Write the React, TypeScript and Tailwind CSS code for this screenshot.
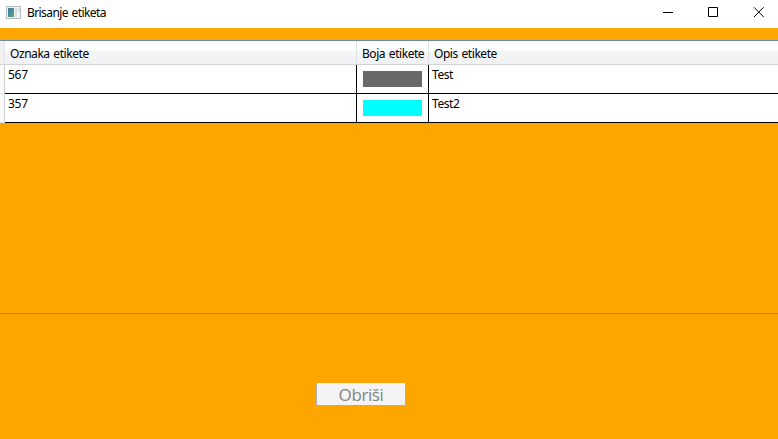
const labels = [
  { code: "567", swatch: "bg-[#696969]", description: "Test" },
  { code: "357", swatch: "bg-[#00ffff]", description: "Test2" },
];

function TitleBar() {
  return (
    <header className="flex h-7 shrink-0 items-start bg-white">
      <svg className="ml-1.5 mt-1.5 shrink-0" width="16" height="14" viewBox="0 0 16 14">
        <defs>
          <linearGradient id="pane" x1="0" y1="0" x2="1" y2="1">
            <stop offset="0" stopColor="#3f74a8" />
            <stop offset="1" stopColor="#4fae78" />
          </linearGradient>
        </defs>
        <rect x="0.5" y="0.5" width="14" height="12" fill="#f3f3f3" stroke="#b9bcbf" />
        <rect x="2" y="2" width="6" height="9" fill="url(#pane)" />
        <rect x="9" y="2" width="2" height="9" fill="#d5dde3" />
        <rect x="12" y="2" width="2" height="4" fill="#d5dde3" />
      </svg>
      <h1 className="ml-[5px] mt-[5px] grow text-[12px] leading-4 tracking-[-0.58px] [word-spacing:1px]">Brisanje etiketa</h1>
      <svg className="mr-[13px] mt-[7px]" width="102" height="11" viewBox="0 0 102 11" fill="none" stroke="#000">
        <path d="M0 5.5h10" />
        <path d="M45.5 .5h9v9h-9z" />
        <path d="M91 .3l9.7 9.7M100.7 .3L91 10" />
      </svg>
    </header>
  );
}

function LabelGrid() {
  return (
    <section className="h-[274px] shrink-0 border-y border-[#688caf]">
      <div className="grid h-6 grid-cols-[5px_352px_72px_1fr] border-b border-[#d2d3d4] bg-[linear-gradient(#fff_0,#fff_10px,#f5f6f8_10px,#eff1f3_100%)] text-[12px] leading-4 tracking-[-0.44px] [word-spacing:1px]">
        <div className="border-r border-[#e3e4e6] bg-[#f0f0f0]" />
        <div className="border-r border-[#dfe1e4] pl-[5px] pt-[5px]">Oznaka etikete</div>
        <div className="whitespace-nowrap border-r border-[#dfe1e4] pl-[5px] pt-[5px]">Boja etikete</div>
        <div className="pl-[5px] pt-[5px]">Opis etikete</div>
      </div>
      {labels.map((label) => (
        <div key={label.code} className="grid h-[29px] grid-cols-[5px_352px_72px_1fr] bg-white text-[12px] leading-4">
          <div className="border-b border-r border-b-[#e4e4e4] border-r-[#d0d0d0] bg-[#fafafa]" />
          <div className="border-b border-r border-black pl-[3px] pt-[2px] tracking-[-0.3px]">{label.code}</div>
          <div className="border-b border-r border-black pl-1.5 pt-1.5">
            <div className={`h-4 w-[59px] ${label.swatch}`} />
          </div>
          <div className="border-b border-black pl-[3px] pt-[2px] tracking-[-0.45px]">{label.description}</div>
        </div>
      ))}
    </section>
  );
}

export default function App() {
  return (
    <div className="flex h-[439px] w-[778px] flex-col overflow-hidden bg-[#ffa500] font-['Noto_Sans','Open_Sans',sans-serif] text-black">
      <TitleBar />
      <main className="flex grow flex-col pt-3">
        <LabelGrid />
        <button
          disabled
          className="ml-[316px] mt-[69px] flex h-[22px] w-[90px] items-center justify-center border-x border-[#adb2b5] bg-[#f4f4f4] pt-px font-['Open_Sans','Noto_Sans',sans-serif] text-[17px] leading-[22px] tracking-[-0.4px] text-[#838383]"
        >
          Obriši
        </button>
      </main>
    </div>
  );
}
